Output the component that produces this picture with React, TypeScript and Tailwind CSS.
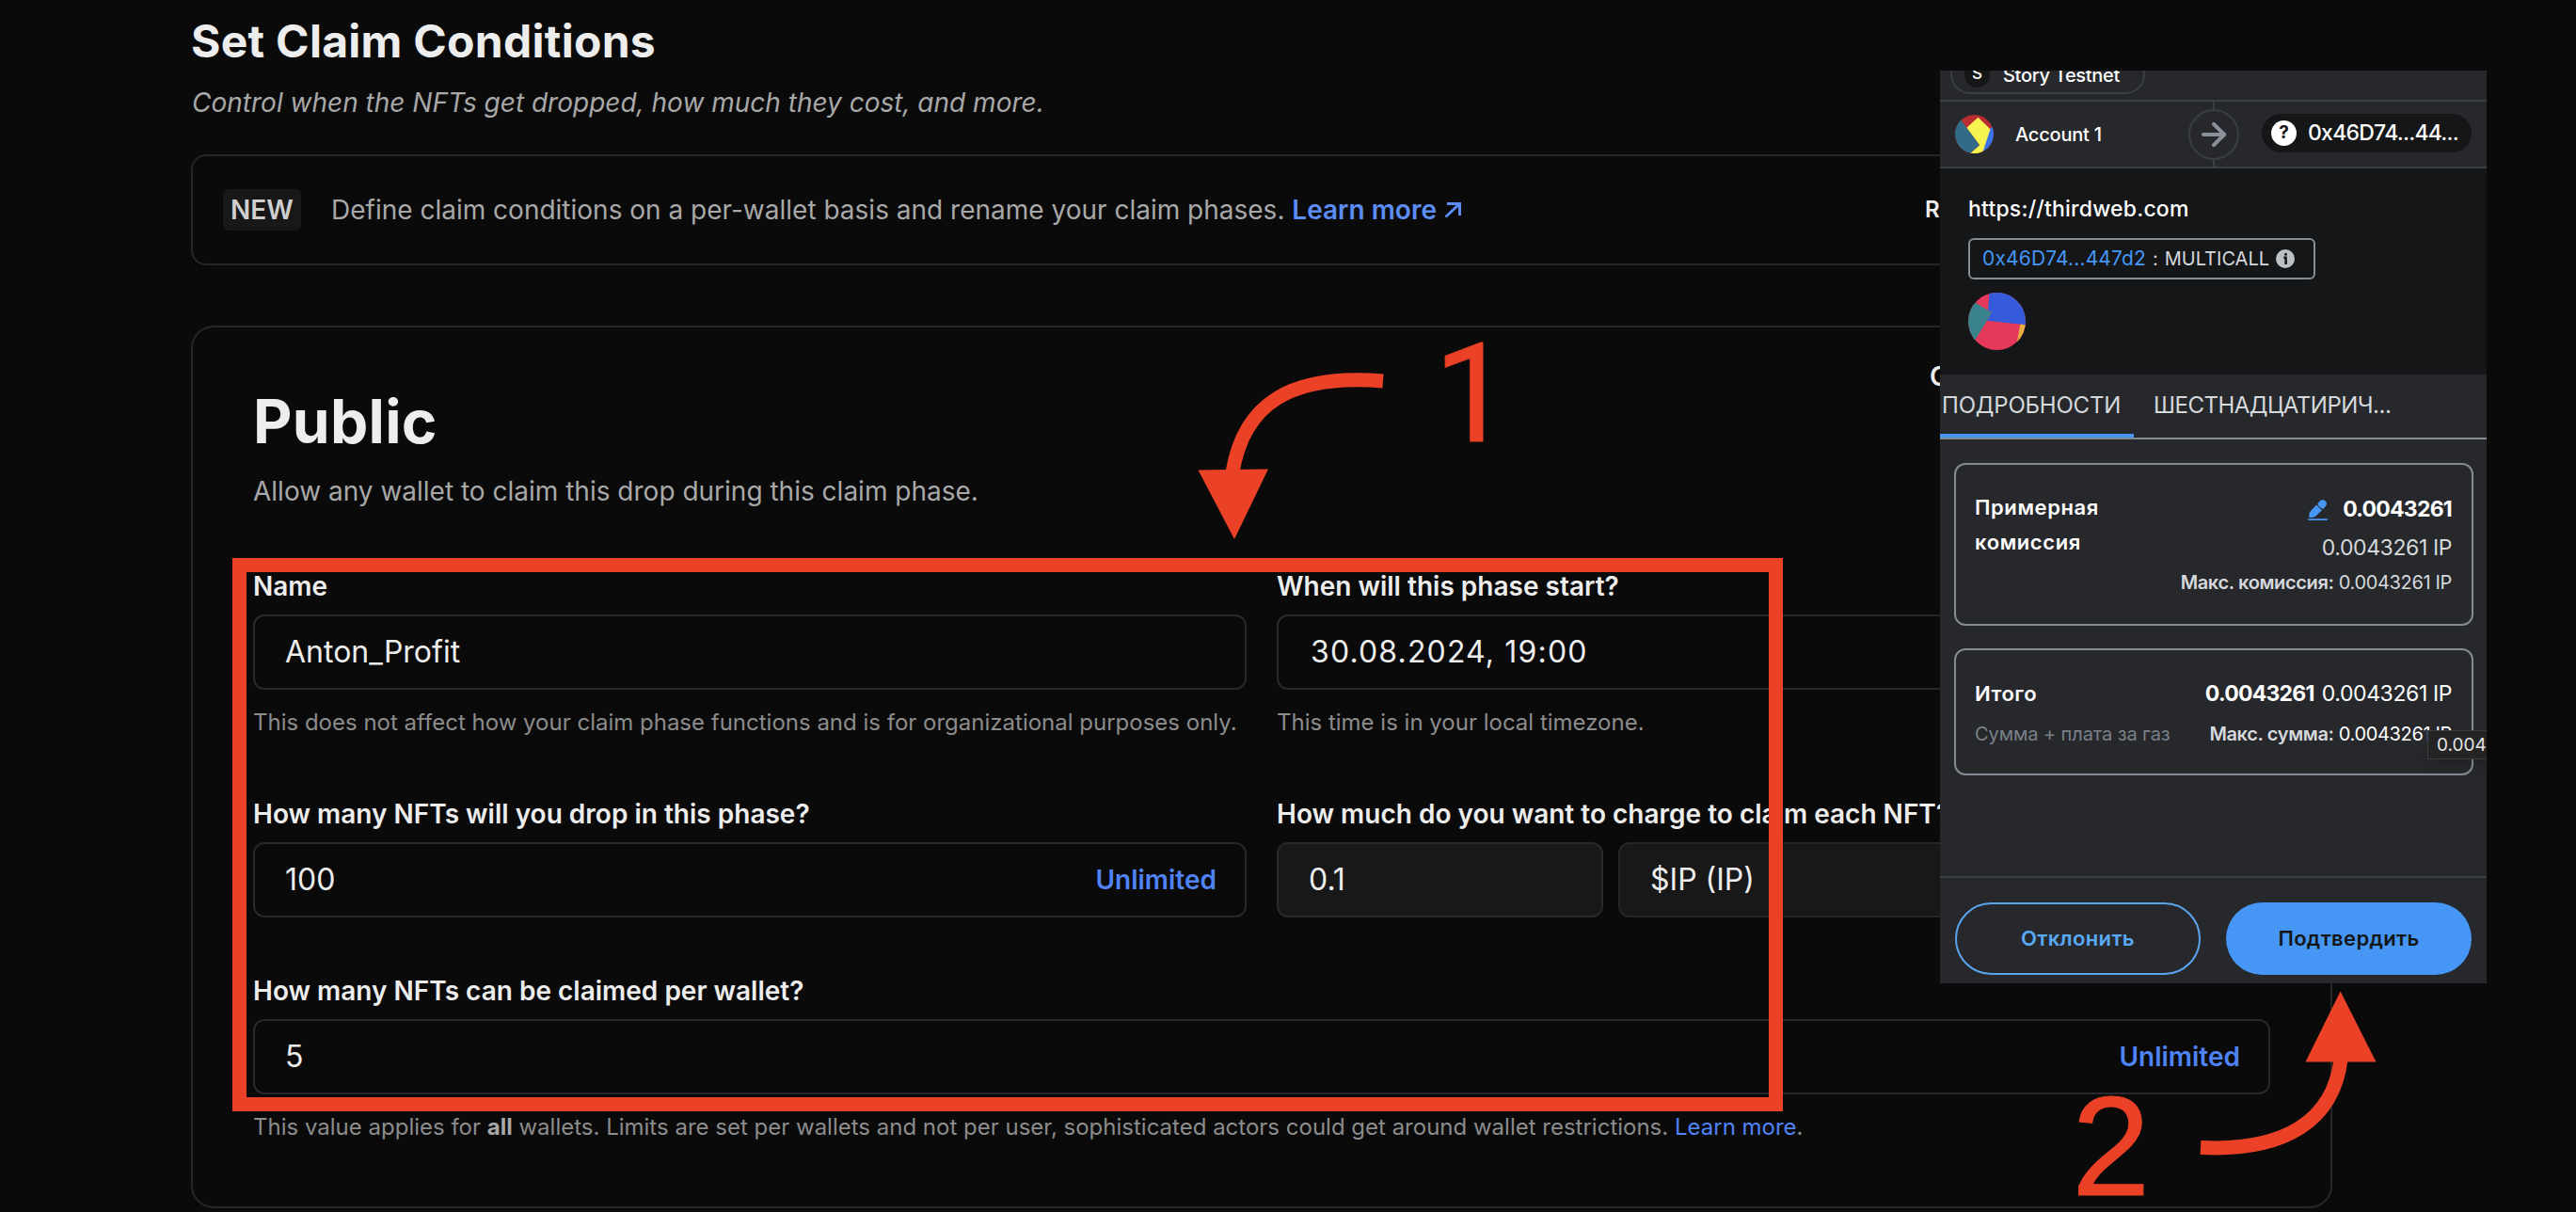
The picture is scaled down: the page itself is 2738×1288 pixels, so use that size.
import type { ReactNode } from "react";
import { ArrowRight } from "lucide-react";

type FieldProps = {
  label: string;
  value: ReactNode;
  action?: string;
  className?: string;
};

function Field({ label, value, action, className = "" }: FieldProps) {
  return (
    <div className={className}>
      <p className="text-[28px] font-semibold leading-8 text-[#ededed]">{label}</p>
      <div className="mt-[14px] flex h-20 items-center justify-between rounded-xl border-2 border-[#26292d] pl-8 pr-[30px] text-[32px]">
        <span className="text-[#ededed]">{value}</span>
        {action && <span className="text-[28px] font-semibold text-[#4f83f6]">{action}</span>}
      </div>
    </div>
  );
}

function AccountAvatar() {
  return (
    <svg viewBox="0 0 41 41" className="h-[41px] w-[41px] rounded-full">
      <rect width="41" height="41" fill="#b92e33" />
      <path d="M37 15 L29.6 38 L41 41 V12Z" fill="#3b73ea" />
      <path d="M24.5 2.7 L37.5 15.3 L30 38 L28 41 H16 L26 32.3 L12.3 13.7Z" fill="#f6f250" />
      <path d="M6.3 5.3 L12.3 13.7 L26 32.3 L16 41 H0 V5Z" fill="#316b88" />
    </svg>
  );
}

function ContractAvatar() {
  return (
    <svg viewBox="0 0 61 61" className="h-[61px] w-[61px] rounded-full">
      <rect width="61" height="61" fill="#e5395a" />
      <path d="M22.5 0 L21 18.3 L25 21 L20 29.7 L61 34.2 V0Z" fill="#355bdb" />
      <path d="M7.5 10.7 L25 21 L20 29.7 L7.5 50 L0 56 V5Z" fill="#3a828b" />
      <path d="M55.3 33.6 L61 34.2 V52 H52Z" fill="#e6ae40" />
    </svg>
  );
}

function EditIcon() {
  return (
    <svg viewBox="0 0 21 22" className="h-[22px] w-[21px]" fill="#4596f5">
      <path d="M9.2 5.4 L15 11.2 L8 17.7 C6.5 18.8 4 19.1 2.4 19 C1.3 18.9 1.1 18 1.3 16.8 C1.5 14.8 1.9 13.2 3 12Z" />
      <path d="M10.3 4.2 L13.2 1.1 C15 -0.3 17 0 18.7 1.5 C20.5 3.3 20.4 5.3 18.9 7 L16.2 10 C13.6 9 11.3 6.9 10.3 4.2Z" />
      <rect y="20.2" width="21" height="1.7" rx=".8" />
    </svg>
  );
}

function WalletPopup() {
  return (
    <div className="absolute left-[2062px] top-[75px] flex h-[970px] w-[581px] flex-col overflow-hidden bg-[#26282c] text-white">
      <div className="flex h-[33px] shrink-0 items-end border-b-2 border-[#3b3f44] pb-[6px] pl-[11px]">
        <div className="flex h-[42px] w-[207px] shrink-0 items-center rounded-full border-2 border-[#3b3f44] pl-[13px]">
          <span className="flex h-[27px] w-[27px] items-center justify-center rounded-full bg-[#151618] text-[17px] font-medium">S</span>
          <span className="ml-[14px] whitespace-nowrap pt-px text-[20px] font-medium tracking-[-0.3px]">Story Testnet</span>
        </div>
      </div>

      <div className="flex h-[71px] shrink-0 items-center border-b-2 border-[#3b3f44] pl-4">
        <AccountAvatar />
        <span className="ml-[23px] w-[122px] whitespace-nowrap text-[20px] font-medium tracking-[-0.2px]">Account 1</span>
        <div className="ml-[62px] flex h-full flex-col items-center">
          <span className="w-[2px] flex-1 bg-[#3b3f44]" />
          <span className="flex h-[54px] w-[54px] items-center justify-center rounded-full border-2 border-[#3b3f44]">
            <ArrowRight className="h-[38px] w-[38px] shrink-0 text-[#8a9099]" strokeWidth={2.6} />
          </span>
          <span className="w-[2px] flex-1 bg-[#3b3f44]" />
        </div>
        <div className="-mt-[3px] ml-6 flex h-[41px] w-[223px] items-center rounded-full bg-[#151618] pl-[10px]">
          <span className="flex h-[27px] w-[27px] items-center justify-center rounded-full bg-white text-[19px] font-bold text-[#151618]">?</span>
          <span className="ml-3 pt-px text-[23px] font-medium tracking-[-0.75px]">0x46D74...44...</span>
        </div>
      </div>

      <div className="h-[219px] shrink-0 bg-[#151618] pl-[30px] pt-[27px]">
        <p className="text-[23px] font-medium leading-8 tracking-[0.2px]">https://thirdweb.com</p>
        <div className="mt-[15px] flex h-11 w-[369px] items-center rounded-md border-2 border-[#868c95] pl-[13px]">
          <span className="text-[21px] tracking-[0.15px] text-[#4596f5]">0x46D74...447d2</span>
          <span className="ml-[7px] text-[20px] text-[#d6d9dc]">:</span>
          <span className="ml-[7px] text-[20px] text-[#d6d9dc]">MULTICALL</span>
          <svg viewBox="0 0 20 20" className="ml-[7px] h-5 w-5">
            <circle cx="10" cy="10" r="10" fill="#bbc0c5" />
            <circle cx="10.5" cy="5.2" r="1.5" fill="#151618" />
            <path d="M8.3 8.8 H10.6 V16" fill="none" stroke="#151618" strokeWidth="2.6" />
          </svg>
        </div>
        <div className="mt-[14px]">
          <ContractAvatar />
        </div>
      </div>

      <div className="flex h-[69px] shrink-0 border-b-2 border-[#848a93] text-[24px] text-[#d6d9dc]">
        <span className="h-[67px] w-[206px] whitespace-nowrap border-b-[4px] border-[#4596f5] pl-[2px] leading-[65px] tracking-[-0.2px]">
          ПОДРОБНОСТИ
        </span>
        <span className="ml-[21px] whitespace-nowrap leading-[65px] tracking-[-0.5px]">ШЕСТНАДЦАТИРИЧ...</span>
      </div>

      <div className="flex-1 pl-[15px] pr-[14px] pt-[25px]">
        <div className="flex h-[173px] justify-between rounded-xl border-2 border-[#848a93] pl-5 pr-[21px] pt-[27px]">
          <p className="text-[22px] font-semibold leading-[37px] tracking-[0.6px]">
            Примерная
            <br />
            комиссия
          </p>
          <div className="text-right">
            <p className="flex h-[41px] items-center justify-end gap-4 text-[23px] font-bold tracking-[-0.75px]">
              <EditIcon />
              <span>0.0043261</span>
            </p>
            <p className="text-[23px] leading-10 tracking-[-0.4px] text-[#d6d9dc]">0.0043261 IP</p>
            <p className="text-[20px] leading-[35px] tracking-[-0.35px] text-[#d6d9dc]">
              <span className="font-semibold">Макс. комиссия:</span> 0.0043261 IP
            </p>
          </div>
        </div>

        <div className="mt-6 h-[135px] rounded-xl border-2 border-[#848a93] pl-5 pr-[21px] pt-[26px]">
          <div className="flex h-10 items-center justify-between">
            <span className="text-[22px] font-semibold tracking-[0.5px]">Итого</span>
            <span className="text-[23px] tracking-[-0.4px]">
              <b className="mr-[2px] tracking-[-0.75px]">0.0043261</b> 0.0043261 IP
            </span>
          </div>
          <div className="flex h-[45px] items-center justify-between text-[20px]">
            <span className="tracking-[-0.1px] text-[#7b8189]">Сумма + плата за газ</span>
            <span className="tracking-[-0.35px]">
              <span className="font-semibold text-[#d6d9dc]">Макс. сумма:</span> 0.0043261 IP
            </span>
          </div>
        </div>
      </div>

      <div className="flex h-[114px] shrink-0 gap-[27px] border-t-2 border-[#3b3f44] pl-4 pt-[26px] text-[22px] font-semibold tracking-[0.35px]">
        <button className="h-[77px] w-[261px] rounded-full border-2 border-[#5aa4ee] text-[#5aa9f5]">Отклонить</button>
        <button className="h-[77px] w-[261px] rounded-full bg-[#4596f5] text-[#151618]">Подтвердить</button>
      </div>

      {/* tooltip running off the popup's right edge */}
      <div className="absolute left-[518px] top-[701px] h-[31px] w-[80px] border border-[#3d3d3f] bg-[#242425] pl-[9px] text-[19px] leading-[29px] text-[#e4e4e4] shadow-lg">
        0.0043
      </div>
    </div>
  );
}

function Annotations() {
  return (
    <>
      <div className="absolute left-[247px] top-[593px] h-[588px] w-[1648px] border-[15px] border-[#eb4126]" />
      <svg viewBox="0 0 2738 1288" className="absolute left-0 top-0 h-[1288px] w-[2738px]" fill="none">
        <path d="M1470 405 C1370 397 1322 430 1310 502" stroke="#eb4126" strokeWidth="15" />
        <path d="M1273.5 499.5 L1348 498.5 L1312 573Z" fill="#eb4126" />
        <path d="M2339 1219.5 C2430 1224 2480 1190 2488 1126" stroke="#eb4126" strokeWidth="15" />
        <path d="M2450.5 1128.5 H2525.5 L2487.6 1053.5Z" fill="#eb4126" />
      </svg>
      <span className="absolute left-[1524px] top-[345px] font-['Roboto'] text-[146px] leading-[150px] text-[#eb4126] [-webkit-text-stroke:1px_#eb4126]">1</span>
      <span className="absolute left-[2202px] top-[1143px] font-['Liberation_Sans'] text-[150px] leading-[150px] text-[#eb4126] [-webkit-text-stroke:1px_#eb4126]">2</span>
    </>
  );
}

export default function App() {
  return (
    <div className="relative h-[1288px] w-[2738px] overflow-hidden bg-[#0a0a0a] pl-[203px] pt-4 font-['Inter',sans-serif] text-[#ededed]">
      <h1 className="text-[48px] font-bold leading-[56px] tracking-[0.28px]">Set Claim Conditions</h1>
      <p className="ml-px mt-[17px] text-[28px] italic leading-10 text-[#a8a8a8]">
        Control when the NFTs get dropped, how much they cost, and more.
      </p>

      <div className="mt-[35px] flex h-[118px] w-[2276px] items-center rounded-2xl border-2 border-[#262626] pl-8 text-[28px]">
        <span className="flex h-11 w-[83px] items-center justify-center rounded-md bg-[#181818] font-semibold text-[#cfcfcf]">NEW</span>
        <p className="ml-8 w-[1694px] text-[#a8a8a8]">
          Define claim conditions on a per-wallet basis and rename your claim phases.{" "}
          <span className="font-semibold text-[#5c8df6]">
            Learn more
            <svg viewBox="0 0 18 17" className="ml-[8px] inline h-[17px] w-[18px] align-[1px]" fill="none" stroke="currentColor" strokeWidth="3">
              <path d="M3 1.5 H16.5 V14 M16.5 1.5 L1.5 15.5" />
            </svg>
          </span>
        </p>
        <span className="text-[24px] font-semibold">Re</span>
      </div>

      <div className="mt-16 h-[938px] w-[2276px] rounded-3xl border-2 border-[#262626] px-16 pt-[68px]">
        <div className="flex h-16 items-start justify-between">
          <h2 className="text-[64px] font-bold leading-[64px] tracking-[0.3px]">Public</h2>
          <span className="-mt-[36px] w-[362px] text-[28px] font-semibold leading-10">C</span>
        </div>
        <p className="mt-[22px] text-[28px] leading-10 text-[#a8a8a8]">Allow any wallet to claim this drop during this claim phase.</p>

        <div className="mt-[65px] grid grid-cols-2 gap-x-8">
          <div>
            <Field label="Name" value="Anton_Profit" />
            <p className="mt-[19px] whitespace-nowrap text-[24px] leading-8 text-[#8c8c8c]">
              This does not affect how your claim phase functions and is for organizational purposes only.
            </p>
          </div>
          <div>
            <Field label="When will this phase start?" value={<span className="pl-[2px] tracking-[1.15px]">30.08.2024, 19:00</span>} />
            <p className="mt-[19px] text-[24px] leading-8 text-[#8c8c8c]">This time is in your local timezone.</p>
          </div>

          <Field className="mt-[65px]" label="How many NFTs will you drop in this phase?" value="100" action="Unlimited" />
          <div className="mt-[65px]">
            <p className="text-[28px] font-semibold leading-8">How much do you want to charge to claim each NFT?</p>
            <div className="mt-[14px] flex gap-4 text-[32px]">
              <div className="flex h-20 w-[347px] items-center rounded-xl border-2 border-[#26292d] bg-[#181818] px-8">0.1</div>
              <div className="flex h-20 flex-1 items-center rounded-xl border-2 border-[#262626] bg-[#181818] px-8">$IP (IP)</div>
            </div>
          </div>

          <Field className="col-span-2 mt-[62px]" label="How many NFTs can be claimed per wallet?" value="5" action="Unlimited" />
        </div>
        <p className="mt-[19px] text-[24px] leading-8 text-[#8c8c8c]">
          This value applies for <b className="font-bold text-[#a8a8a8]">all</b> wallets. Limits are set per wallets and not per user, sophisticated actors could get
          around wallet restrictions. <span className="text-[#4f83f6]">Learn more</span>.
        </p>
      </div>

      <WalletPopup />
      <Annotations />
    </div>
  );
}
